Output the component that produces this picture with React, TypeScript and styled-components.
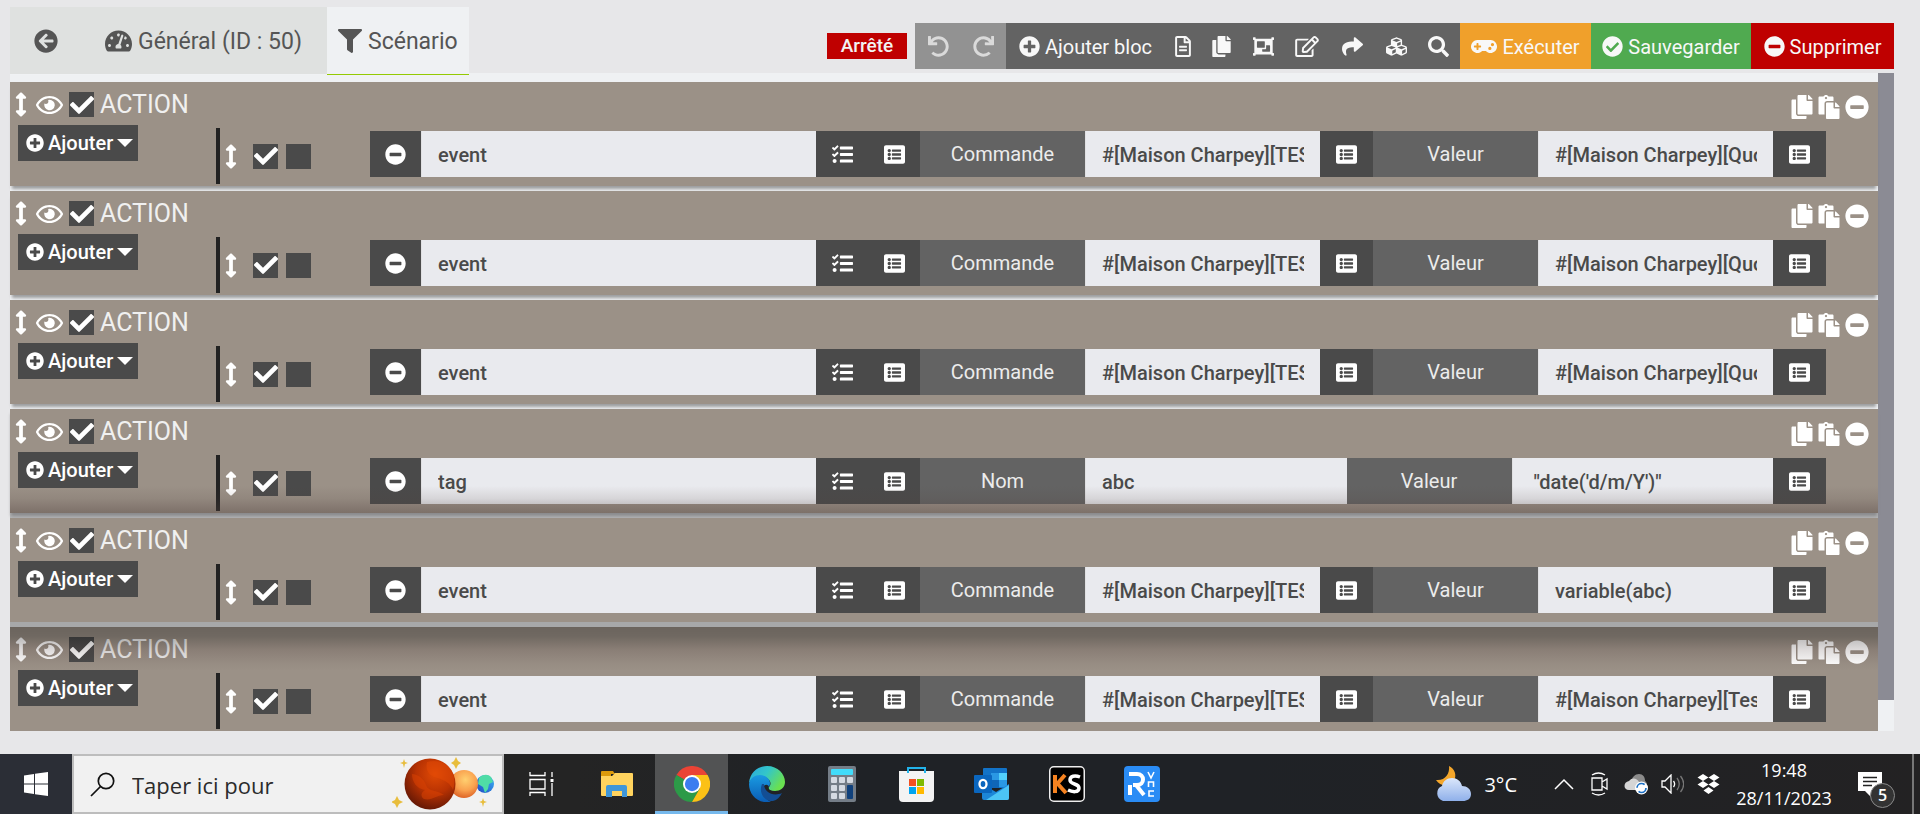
import React from "react";
import styled, { createGlobalStyle } from "styled-components";
import {
  FaArrowCircleLeft, FaTachometerAlt, FaFilter, FaArrowsAltV, FaRegEye, FaCheck, FaPlusCircle,
  FaMinusCircle, FaListAlt, FaUndo, FaRedo, FaRegFileAlt, FaCopy, FaObjectGroup, FaRegEdit,
  FaShare, FaCubes, FaSearch, FaGamepad, FaCheckCircle, FaPaste,
} from "react-icons/fa";

const GlobalStyle = createGlobalStyle`
  * { box-sizing: border-box; }
  body { margin: 0; background: #e7e7e9; font-family: Roboto, "Liberation Sans", sans-serif; color: #fff; }
  button, input { font: inherit; color: inherit; border: 0; margin: 0; padding: 0; background: none; border-radius: 0; }
  button { cursor: pointer; }
`;

const Page = styled.div`
  min-height: 100vh;
  display: flex;
  flex-direction: column;
`;

const Icon = styled.span<{ $size?: number; $w?: number }>`
  display: inline-flex;
  flex: none;
  svg {
    height: ${(p) => p.$size ?? 21}px;
    width: ${(p) => p.$w ?? p.$size ?? 21}px;
    display: block;
  }
`;

/* ---------- header ---------- */
const Header = styled.header`
  display: flex;
  justify-content: space-between;
  height: 73px;
  padding: 7px 26px 0 10px;
`;

const Tabs = styled.nav`
  display: flex;
  position: relative;
  z-index: 1;
  height: 68px;
  font-size: 23px;
  background: #dfe1e0;
`;

const Tab = styled.a<{ $active?: boolean; $pad?: string }>`
  display: flex;
  align-items: center;
  gap: 6px;
  padding: ${(p) => p.$pad ?? "1px 11px 0"};
  color: #555;
  text-decoration: none;
  white-space: nowrap;
  background: ${(p) => (p.$active ? "#eff1f3" : "transparent")};
  border-bottom: 1px solid ${(p) => (p.$active ? "#94ca02" : "#f0f2f4")};
`;

const Toolbar = styled.div`
  display: flex;
  align-items: center;
  height: 46px;
  margin-top: 16px;
  font-size: 20px;
  color: #f3f3f3;
`;

const Status = styled.span`
  background: #bf0000;
  line-height: 26px;
  width: 80px;
  text-align: center;
  font-size: 19px;
  font-weight: 500;
  margin-right: 8px;
`;

const ToolButton = styled.button<{ $bg?: string; $w?: number; $dim?: boolean }>`
  display: flex;
  align-items: center;
  justify-content: center;
  gap: 5px;
  height: 46px;
  width: ${(p) => p.$w ?? 42}px;
  padding-top: 1px;
  white-space: nowrap;
  background: ${(p) => p.$bg ?? "#636363"};
  color: ${(p) => (p.$dim ? "#dadada" : "#f8f8f8")};
`;

/* ---------- scenario blocks ---------- */
const Panel = styled.main`
  display: flex;
  margin: 0 26px 23px 10px;
  background: #eff1f3;
`;

const Blocks = styled.div`
  flex: 1;
  min-width: 0;
  display: flex;
  flex-direction: column;
  gap: 5px;
  padding-top: 9px;
`;

const Track = styled.div`
  width: 16px;
  flex: none;
`;

const Thumb = styled.div`
  height: 95.3%;
  background: #8b8b94;
`;

type Shade = "none" | "bottom" | "flat" | "top";

const shadeImage: Record<Shade, string> = {
  none: "none",
  flat: "none",
  bottom: "linear-gradient(to bottom, rgba(80,64,60,0) 74%, rgba(80,64,60,.12) 86%, rgba(80,64,60,.4) 100%)",
  top: "linear-gradient(to bottom, rgba(0,0,0,.31) 0, rgba(0,0,0,.28) 9%, rgba(50,30,30,.16) 22%, rgba(50,30,30,.04) 35%, rgba(50,30,30,0) 42%)",
};

const Block = styled.section<{ $shade: Shade }>`
  position: relative;
  height: 104px;
  background: #9b9187;
  box-shadow: ${(p) =>
    p.$shade === "flat" ? "0 5px 0 #a7a8a9"
      : p.$shade === "bottom" ? "0 4px 3px -1px #8a8a8c, 0 5px 0 #b2b3b4"
      : p.$shade === "top" ? "none" : "0 5px 3px -2px rgba(0,0,0,.35)"};
  &::after {
    content: "";
    position: absolute;
    inset: 0;
    pointer-events: none;
    background-image: ${(p) => shadeImage[p.$shade]};
  }
`;

const BlockHead = styled.div`
  display: flex;
  align-items: center;
  justify-content: space-between;
  height: 43px;
  padding: 2px 9px 0 5px;
`;

const HeadGroup = styled.div`
  display: flex;
  align-items: center;
  gap: 6px;
`;

const HeadActions = styled.div`
  display: flex;
  align-items: center;
  gap: 4px;
  padding-top: 4px;
`;

const Title = styled.span`
  font-size: 25px;
  line-height: 32px;
  color: #f0f0f0;
`;

const IconButton = styled.button`
  display: inline-flex;
`;

const Handle = styled.span<{ $w: number }>`
  display: inline-flex;
  width: ${(p) => p.$w}px;
  svg { height: 25px; width: 12px; display: block; }
`;

const CheckWrap = styled.label`
  display: inline-grid;
  width: 25px;
  height: 25px;
  background: #4a4a4a;
  place-items: center;
  > * { grid-area: 1 / 1; }
  svg { width: 24px; height: 24px; pointer-events: none; }
`;

const CheckInput = styled.input`
  appearance: none;
  width: 25px;
  height: 25px;
`;

const BlockBody = styled.div`
  display: flex;
  padding-left: 8px;
`;

const AddButton = styled.button`
  display: flex;
  align-items: center;
  width: 120px;
  height: 36px;
  padding-left: 8px;
  gap: 4px;
  background: #4a4a4a;
  font-size: 20px;
  font-weight: 500;
`;

const Expression = styled.div`
  flex: 1;
  min-width: 0;
  display: flex;
  align-items: center;
  height: 56px;
  margin: 3px 52px 0 78px;
  border-left: 4px solid #222;
  padding-left: 5px;
`;

const Controls = styled.div`
  display: flex;
  align-items: center;
  gap: 8px;
  width: 145px;
  flex: none;
`;

const Fields = styled.div`
  flex: 1;
  min-width: 0;
  display: flex;
  height: 46px;
  margin-bottom: 4px;
`;

const CommandPart = styled.div`
  flex: 550 1 0;
  min-width: 0;
  display: flex;
`;

const OptionsPart = styled.div`
  flex: 906 1 0;
  min-width: 0;
  display: flex;
`;

const DarkButton = styled.button<{ $w?: number }>`
  width: ${(p) => p.$w ?? 52}px;
  flex: none;
  display: flex;
  align-items: center;
  justify-content: center;
  background: #4a4a4a;
`;

const FieldLabel = styled.label`
  width: 165px;
  flex: none;
  background: #636363;
  color: #ececec;
  font-size: 20px;
  line-height: 46px;
  text-align: center;
`;

const TextField = styled.input`
  flex: 1 1 0;
  width: 0;
  min-width: 0;
  padding: 2px 16px 0;
  border-left: 1px solid #e0e0e2;
  background: #e9eaee;
  color: #4a4a4a;
  font-size: 20px;
  font-weight: 500;
  outline: none;
`;

const TasksIcon = () => (
  <svg viewBox="0 0 512 512" fill="currentColor">
    <path d="M208 132h288c8.800 0 16-7.200 16-16V76c0-8.800-7.200-16-16-16H208c-8.800 0-16 7.200-16 16v40c0 8.800 7.200 16 16 16zm0 160h288c8.800 0 16-7.200 16-16v-40c0-8.800-7.200-16-16-16H208c-8.800 0-16 7.200-16 16v40c0 8.800 7.200 16 16 16zm0 160h288c8.800 0 16-7.200 16-16v-40c0-8.800-7.200-16-16-16H208c-8.800 0-16 7.200-16 16v40c0 8.800 7.200 16 16 16zM64 368c-26.500 0-48.600 21.500-48.600 48s22.100 48 48.600 48 48-21.500 48-48-21.500-48-48-48zm92.500-299l-72.200 72.200-15.600 15.600c-4.700 4.700-12.900 4.700-17.600 0L3.500 109.400c-4.700-4.700-4.700-12.300 0-17l15.700-15.700c4.700-4.700 12.300-4.700 17 0l22.700 22.100 63.700-63.300c4.700-4.700 12.300-4.700 17 0l17 16.500c4.600 4.700 4.600 12.300-.1 17zm0 159.600l-72.200 72.200-15.700 15.700c-4.700 4.700-12.900 4.700-17.600 0L3.500 269c-4.700-4.700-4.700-12.300 0-17l15.700-15.700c4.700-4.700 12.300-4.700 17 0l22.700 22.100 63.700-63.700c4.700-4.700 12.300-4.700 17 0l17 17c4.600 4.600 4.600 12.200-.1 16.900z" />
  </svg>
);

function Check({ checked, label }: { checked?: boolean; label: string }) {
  return (
    <CheckWrap>
      <CheckInput type="checkbox" defaultChecked={checked} aria-label={label} />
      {checked && <FaCheck />}
    </CheckWrap>
  );
}

type Option = { label: string; value: string; picker: boolean };
type BlockData = { command: string; options: Option[]; shade: Shade };

const cmd: Option = { label: "Commande", value: "#[Maison Charpey][TEST]", picker: true };
const quote: Option = { label: "Valeur", value: "#[Maison Charpey][Quotidien]", picker: true };

const blocks: BlockData[] = [
  { command: "event", options: [cmd, quote], shade: "none" },
  { command: "event", options: [cmd, quote], shade: "none" },
  { command: "event", options: [cmd, quote], shade: "none" },
  {
    command: "tag",
    options: [
      { label: "Nom", value: "abc", picker: false },
      { label: "Valeur", value: " \"date('d/m/Y')\"", picker: true },
    ],
    shade: "bottom",
  },
  { command: "event", options: [cmd, { label: "Valeur", value: "variable(abc)", picker: true }], shade: "flat" },
  { command: "event", options: [cmd, { label: "Valeur", value: "#[Maison Charpey][Tes", picker: true }], shade: "top" },
];

function ActionBlock({ data, index }: { data: BlockData; index: number }) {
  return (
    <Block $shade={data.shade}>
      <BlockHead>
        <HeadGroup>
          <Handle $w={15}><FaArrowsAltV /></Handle>
          <IconButton aria-label="Afficher"><Icon $size={24} $w={27}><FaRegEye /></Icon></IconButton>
          <Check checked label="Activer le bloc" />
          <Title>ACTION</Title>
        </HeadGroup>
        <HeadActions>
          <IconButton aria-label="Copier"><Icon $size={24} $w={22}><FaCopy /></Icon></IconButton>
          <IconButton aria-label="Coller"><Icon $size={24}><FaPaste /></Icon></IconButton>
          <IconButton aria-label="Retirer"><Icon $size={24}><FaMinusCircle /></Icon></IconButton>
        </HeadActions>
      </BlockHead>
      <BlockBody>
        <AddButton>
          <Icon $size={18}><FaPlusCircle /></Icon>
          Ajouter
          <svg width="16" height="8" viewBox="0 0 16 8"><path d="M0 0h16L8 8z" fill="currentColor" /></svg>
        </AddButton>
        <Expression>
          <Controls>
            <Handle $w={20}><FaArrowsAltV /></Handle>
            <Check checked label="Activer l'action" />
            <Check label="Exécuter en parallèle" />
          </Controls>
          <Fields>
            <CommandPart>
              <DarkButton $w={51} aria-label="Retirer l'action"><Icon><FaMinusCircle /></Icon></DarkButton>
              <TextField aria-label="Action" defaultValue={data.command} />
              <DarkButton aria-label="Choisir un mot-clé"><Icon><TasksIcon /></Icon></DarkButton>
              <DarkButton aria-label="Choisir une commande"><Icon><FaListAlt /></Icon></DarkButton>
            </CommandPart>
            <OptionsPart>
              {data.options.map((o, i) => {
                const id = `option-${index}-${i}`;
                return (
                  <React.Fragment key={id}>
                    <FieldLabel htmlFor={id}>{o.label}</FieldLabel>
                    <TextField id={id} defaultValue={o.value} />
                    {o.picker && (
                      <DarkButton $w={53} aria-label="Choisir une commande"><Icon><FaListAlt /></Icon></DarkButton>
                    )}
                  </React.Fragment>
                );
              })}
            </OptionsPart>
          </Fields>
        </Expression>
      </BlockBody>
    </Block>
  );
}

/* ---------- taskbar ---------- */
const Taskbar = styled.footer`
  display: flex;
  height: 60px;
  margin-top: auto;
  background: linear-gradient(90deg, #242424 30%, #1f2226 45%, #1f2226 65%, #232223 100%);
  font-family: "Open Sans", "Noto Sans", sans-serif;
`;

const StartButton = styled.button`
  width: 72px;
  flex: none;
  display: grid;
  place-items: center;
  background: #2b2e36;
`;

const SearchBox = styled.div`
  width: 432px;
  flex: none;
  display: flex;
  align-items: center;
  margin-right: 1px;
  padding: 0 6px 0 16px;
  background: #f1f1f1;
  border: 2px solid #bdbdbd;
  input {
    flex: 1;
    min-width: 0;
    padding: 2px 0 0 17px;
    font-size: 22px;
    color: #2b2b2b;
    outline: none;
    &::placeholder { color: #2b2b2b; opacity: 1; }
  }
`;

const TaskButton = styled.button<{ $active?: boolean }>`
  width: 73px;
  margin-right: 2px;
  flex: none;
  display: grid;
  place-items: center;
  border-top: 3px solid ${(p) => (p.$active ? "#525354" : "transparent")};
  border-bottom: 3px solid ${(p) => (p.$active ? "#76b9ed" : "transparent")};
  background: ${(p) => (p.$active ? "#525354" : "transparent")};
`;

const Tray = styled.div`
  margin-left: auto;
  display: flex;
  align-items: center;
`;

const Weather = styled.div`
  display: flex;
  align-items: center;
  gap: 13px;
  margin-right: 37px;
  font-size: 20px;
`;

const TrayIcons = styled.div`
  display: flex;
  align-items: center;
  gap: 13px;
`;

const Clock = styled.div`
  width: 128px;
  text-align: center;
  font-size: 18px;
  line-height: 28px;
`;

const Notice = styled.button`
  position: relative;
  width: 37px;
  height: 60px;
  margin: 0 17px 0 10px;
`;

const NoticeIcon = styled.svg`
  display: block;
`;

const Badge = styled.span`
  position: absolute;
  right: 0;
  top: 29px;
  width: 25px;
  height: 25px;
  border: 1px solid #8a8a8a;
  border-radius: 50%;
  background: #333;
  font-size: 16px;
  font-weight: 600;
  line-height: 23px;
  text-align: center;
`;

const DesktopEdge = styled.div`
  width: 8px;
  height: 60px;
  border-left: 2px solid #777;
`;

const Planets = () => (
  <svg width="104" height="56" viewBox="0 0 104 56">
    <defs>
      <radialGradient id="mars" cx=".6" cy=".3" r=".75">
        <stop offset="0" stopColor="#e04a05" /><stop offset=".5" stopColor="#b83203" /><stop offset="1" stopColor="#5e1605" />
      </radialGradient>
      <radialGradient id="venus" cx=".55" cy=".35" r=".7">
        <stop offset="0" stopColor="#ffd070" /><stop offset=".55" stopColor="#f9a04e" /><stop offset="1" stopColor="#d95a20" />
      </radialGradient>
      <linearGradient id="earth" x1="0" y1="1" x2="1" y2="0">
        <stop offset="0" stopColor="#1d44c4" /><stop offset="1" stopColor="#3fb8f5" />
      </linearGradient>
    </defs>
    <circle cx="93" cy="28" r="9" fill="url(#earth)" />
    <path d="M87 22c4-4 9-4 12-1l2 5-4 2-1 5-3 4-2-6-5-3z" fill="#4fdca6" />
    <circle cx="72" cy="28" r="14" fill="url(#venus)" />
    <circle cx="38" cy="28" r="25.5" fill="url(#mars)" />
    <path d="M35 6c-2 8 2 14 10 16s14 6 16 12c3-9 1-19-6-25-6-4-13-5-20-3z" fill="#e44a05" opacity=".5" />
    <path d="M20 18c0 8 5 15 13 16-5 3-4 7-1 9 8 2 12-4 20-4-6-5-16-3-18-10-2-6-8-11-14-11z" fill="#d84204" opacity=".55" />
    <path d="M12 3l1 3 3 1-3 1-1 4-1-4-3-1 3-1zM64 1l2 4 3 2-3 2-2 4-2-4-3-2 3-2zM5 40l2 4 4 2-4 2-2 4-2-4-4-2 4-2zM91 42l1 3 3 1-3 1-1 4-1-4-3-1 3-1z" fill="#e8bd3c" />
  </svg>
);

const TaskViewIcon = () => (
  <svg width="26" height="24" viewBox="0 0 26 24" fill="none" stroke="#fff" strokeWidth="1.3">
    <path d="M1 0v3.500h15V0M1 24v-3.500h15V24M1 7.500h15v9.500H1zM23 0v5M23 11v13" />
    <path d="M21.500 7h3v3h-3z" fill="#fff" stroke="none" />
  </svg>
);

const ExplorerIcon = () => (
  <svg width="32" height="28" viewBox="0 0 32 28">
    <path d="M0 2a1 1 0 011-1h11l2 3h-4v4H0z" fill="#dc9a0c" />
    <path d="M0 6h11l3-3h17a1 1 0 011 1v21a1 1 0 01-1 1H1a1 1 0 01-1-1z" fill="#ffd35e" />
    <path d="M5 27V17a2 2 0 012-2h17a2 2 0 012 2v10h-5v-6H11v6z" fill="#3f96d8" />
  </svg>
);

const ChromeIcon = () => (
  <svg width="36" height="36" viewBox="0 0 48 48">
    <path d="M24 24L3.200 12A24 24 0 0144.800 12z" fill="#ea4335" />
    <path d="M24 24l10.400 6L24 48A24 24 0 013.200 12z" fill="#2c9a48" />
    <path d="M24 12h20.800A24 24 0 0124 48l10.400-18z" fill="#fbc116" />
    <circle cx="24" cy="24" r="12" fill="#fff" />
    <circle cx="24" cy="24" r="9.500" fill="#3b7df0" />
  </svg>
);

const EdgeIcon = () => (
  <svg width="36" height="36" viewBox="0 0 36 36">
    <defs>
      <linearGradient id="edgeTop" x1="0" y1="0" x2="1" y2=".5">
        <stop offset="0" stopColor="#2aa8e0" /><stop offset=".5" stopColor="#33c6c9" /><stop offset="1" stopColor="#6ae050" />
      </linearGradient>
      <linearGradient id="edgeLeft" x1="0" y1="0" x2="0" y2="1">
        <stop offset="0" stopColor="#1a9be2" /><stop offset="1" stopColor="#0a5cb4" />
      </linearGradient>
    </defs>
    <path d="M0 17C1 6 9 0 18 0c11 0 18 8 18 16 0 6-5 9-10 9-5 0-7-2-6-4 2-2 2-5 0-7-4-5-15-5-20 3z" fill="url(#edgeTop)" />
    <path d="M0 18c1-6 6-9 11-9 6 0 10 4 10 8 0 2-1 4-1 4-1-3-5-3-6 1-2 6 4 12 8 14C9 38 0 29 0 18z" fill="url(#edgeLeft)" />
    <path d="M13 18c-4 9 3 18 11 17 4-1 7-4 9-8-9 4-18-1-18-9z" fill="#134e94" />
  </svg>
);

const CalcIcon = () => (
  <svg width="28" height="36" viewBox="0 0 28 36">
    <rect width="28" height="36" rx="2" fill="#747d87" />
    <rect x="3" y="3" width="22" height="6" rx="1" fill="#42dcfa" />
    <g fill="#d5dae2">
      {[11, 19, 27].map((y) => [3, 11].map((x) => <rect key={`${x}-${y}`} x={x} y={y} width="6" height="6" rx="1" />))}
      <rect x="19" y="11" width="6" height="6" rx="1" />
    </g>
    <rect x="19" y="19" width="6" height="14" rx="1" fill="#10417c" />
  </svg>
);

const StoreIcon = () => (
  <svg width="36" height="36" viewBox="0 0 36 36">
    <path d="M0 5h35v27a4 4 0 01-4 4H4a4 4 0 01-4-4z" fill="#f3f3f3" />
    <path d="M9 7V2h17v5" fill="none" stroke="#22b3ea" strokeWidth="2" />
    <path d="M10 13h7v7h-7z" fill="#f25022" /><path d="M18 13h7v7h-7z" fill="#7fba00" />
    <path d="M10 21h7v7h-7z" fill="#00a4ef" /><path d="M18 21h7v7h-7z" fill="#ffb900" />
  </svg>
);

const OutlookIcon = () => (
  <svg width="36" height="32" viewBox="0 0 36 32">
    <rect x="9" width="24" height="20" rx="1" fill="#1273c8" />
    <path d="M17 5h8v7h-8z" fill="#2a98e4" /><path d="M25 5h8v7h-8z" fill="#52d0fb" /><path d="M17 12h8v8h-8z" fill="#1066b8" />
    <path d="M25 12h8v7h-8z" fill="#2a98e4" />
    <path d="M8 16l14 8 13-8v14a2 2 0 01-2 2H10a2 2 0 01-2-2z" fill="#1c86d8" />
    <path d="M35 17L12 32h21a2 2 0 002-2z" fill="#4cc4f5" />
    <rect y="7" width="18" height="18" rx="1" fill="#0a66be" />
    <ellipse cx="9" cy="16" rx="3.500" ry="4.200" fill="none" stroke="#fff" strokeWidth="2.300" />
  </svg>
);

const KsIcon = () => (
  <svg width="36" height="36" viewBox="0 0 36 36">
    <rect x=".75" y=".75" width="34.500" height="34.500" rx="4" fill="#000" stroke="#eee" strokeWidth="1.500" />
    <path d="M6 9v18M16 9L8 18" fill="none" stroke="#f58220" strokeWidth="4" />
    <path d="M8 17l9 10" fill="none" stroke="#f58220" strokeWidth="4" />
    <path d="M31 11c-5-2-10-1-10 3 0 5 9 3 9 8 0 5-7 4-11 2" fill="none" stroke="#fff" strokeWidth="3.500" />
  </svg>
);

const VncIcon = () => (
  <svg width="36" height="36" viewBox="0 0 36 36" fill="none" stroke="#fff">
    <rect width="36" height="36" rx="4" fill="#2a8cf5" stroke="none" />
    <path d="M5 8h8c8 0 8 11 0 11H9M6 19v10M12 19l8 10" strokeWidth="4" />
    <path d="M24 6l3 6 3-6M24.500 21v-5h5v5M30 25h-5v5h5" strokeWidth="1.600" />
  </svg>
);

const WeatherIcon = () => (
  <svg width="36" height="36" viewBox="0 0 36 36">
    <defs>
      <linearGradient id="cloud" x1="0" y1="0" x2="0" y2="1">
        <stop offset="0" stopColor="#dbe7fb" /><stop offset="1" stopColor="#8fb0ea" />
      </linearGradient>
    </defs>
    <path d="M14 0c6 3 8 9 5 15-4 6-14 6-18-1 9 1 14-6 13-14z" fill="#f3a62b" />
    <path d="M8 35a8 8 0 01-1-15c1-5 5-8 10-8s9 3 10 8c5 0 9 3 9 8s-4 7-8 7z" fill="url(#cloud)" />
  </svg>
);

const apps = [
  { name: "Vue des tâches", icon: <TaskViewIcon /> },
  { name: "Explorateur", icon: <ExplorerIcon /> },
  { name: "Chrome", icon: <ChromeIcon />, active: true },
  { name: "Edge", icon: <EdgeIcon /> },
  { name: "Calculatrice", icon: <CalcIcon /> },
  { name: "Store", icon: <StoreIcon /> },
  { name: "Outlook", icon: <OutlookIcon /> },
  { name: "KS", icon: <KsIcon /> },
  { name: "VNC", icon: <VncIcon /> },
];

const tools = [
  { name: "Journal", icon: <FaRegFileAlt />, w: 35, iw: 16 },
  { name: "Copier", icon: <FaCopy />, w: 43, iw: 19 },
  { name: "Grouper", icon: <FaObjectGroup />, w: 41, iw: 23 },
  { name: "Éditer", icon: <FaRegEdit />, w: 46, iw: 24 },
  { name: "Partager", icon: <FaShare />, w: 45, iw: 21 },
  { name: "Modèles", icon: <FaCubes />, w: 42, iw: 21 },
  { name: "Rechercher", icon: <FaSearch />, w: 43, iw: 21 },
];

export default function App() {
  return (
    <Page>
      <GlobalStyle />
      <Header>
        <Tabs>
          <Tab href="#retour" $pad="0 24px" aria-label="Retour"><Icon $size={24}><FaArrowCircleLeft /></Icon></Tab>
          <Tab href="#general" $pad="1px 25px 0 23px"><Icon $size={24} $w={27}><FaTachometerAlt /></Icon>Général (ID : 50)</Tab>
          <Tab href="#scenario" $active><Icon $size={24}><FaFilter /></Icon>Scénario</Tab>
        </Tabs>
        <Toolbar>
          <Status>Arrêté</Status>
          <ToolButton $bg="#929292" $dim $w={46} aria-label="Annuler"><Icon><FaUndo /></Icon></ToolButton>
          <ToolButton $bg="#929292" $dim $w={45} aria-label="Rétablir"><Icon><FaRedo /></Icon></ToolButton>
          <ToolButton $w={159}><Icon><FaPlusCircle /></Icon>Ajouter bloc</ToolButton>
          {tools.map((t) => (
            <ToolButton key={t.name} $w={t.w} aria-label={t.name}><Icon $w={t.iw}>{t.icon}</Icon></ToolButton>
          ))}
          <ToolButton $bg="#f0a02b" $w={131}><Icon $w={26}><FaGamepad /></Icon>Exécuter</ToolButton>
          <ToolButton $bg="#50aa50" $w={160}><Icon><FaCheckCircle /></Icon>Sauvegarder</ToolButton>
          <ToolButton $bg="#bf0000" $w={143}><Icon><FaMinusCircle /></Icon>Supprimer</ToolButton>
        </Toolbar>
      </Header>

      <Panel>
        <Blocks>
          {blocks.map((b, i) => <ActionBlock key={i} data={b} index={i} />)}
        </Blocks>
        <Track><Thumb /></Track>
      </Panel>

      <Taskbar>
        <StartButton aria-label="Démarrer">
          <svg width="24" height="24" viewBox="0 0 24 24" fill="#fff">
            <path d="M0 3.400L10 2v9.500H0zM11 1.800L24 0v11.500H11zM0 12.500h10V22L0 20.600zM11 12.500h13V24l-13-1.800z" />
          </svg>
        </StartButton>
        <SearchBox>
          <svg width="25" height="25" viewBox="0 0 25 25" fill="none" stroke="#111" strokeWidth="1.700">
            <circle cx="16" cy="9" r="7.700" /><path d="M10.500 14.500L1 24" />
          </svg>
          <input type="text" placeholder="Taper ici pour" aria-label="Rechercher" />
          <Planets />
        </SearchBox>
        {apps.map((a) => (
          <TaskButton key={a.name} $active={a.active} aria-label={a.name}>{a.icon}</TaskButton>
        ))}
        <Tray>
          <Weather><WeatherIcon />3°C</Weather>
          <TrayIcons>
            <svg width="20" height="12" viewBox="0 0 20 12" fill="none" stroke="#fff" strokeWidth="1.500"><path d="M1 11l9-9 9 9" /></svg>
            <svg width="24" height="24" viewBox="0 0 24 24" fill="none" stroke="#fff" strokeWidth="1.300">
              <path d="M5 6h10v12H5zM15 10l5-3v10l-5-3M5 3c4-2.500 9-2.500 13 0M5 21c4 2.500 9 2.500 13 0" />
            </svg>
            <svg width="24" height="24" viewBox="0 0 24 24">
              <path d="M7 10c1-5 4-8 8-8 4 0 6 3 6 7 2 1 3 5 0 7z" fill="#8b8b8b" />
              <path d="M5 18c-6 0-6-8 0-9 3-4 8-3 10 1l6 8z" fill="#d5d5d5" />
              <circle cx="17.500" cy="16" r="6.500" fill="#fff" />
              <circle cx="17.500" cy="16" r="4.500" fill="none" stroke="#1b6fc4" strokeWidth="1.700" strokeDasharray="10 4" />
            </svg>
            <svg width="23" height="20" viewBox="0 0 23 20" fill="none" stroke="#fff" strokeWidth="1.300">
              <path d="M1 7h3l6-6v18l-6-6H1zM12.500 7c1.500 2 1.500 4 0 6" />
              <path d="M16 4c3 4 3 8 0 12M19.500 2c4 5 4 11 0 16" stroke="#777" />
            </svg>
            <svg width="23" height="20" viewBox="0 0 23 20" fill="#fff">
              <path d="M6 0l5.500 3.500L6 7 .5 3.500zM17 0l5.500 3.500L17 7l-5.500-3.500zM6 7l5.500 3.500L6 14 .5 10.500zM17 7l5.500 3.500L17 14l-5.500-3.500zM11.500 13l5 3.500-5 3.500-5-3.500z" />
            </svg>
          </TrayIcons>
          <Clock><div>19:48</div><div>28/11/2023</div></Clock>
          <Notice aria-label="Notifications">
            <NoticeIcon width="25" height="25" viewBox="0 0 25 25">
              <path d="M0 0h24v19H14l-1 6-6-6H0z" fill="#fff" />
              <path d="M5 5.500h14M5 9.500h14M5 13.500h9" stroke="#222" strokeWidth="1.300" />
            </NoticeIcon>
            <Badge>5</Badge>
          </Notice>
          <DesktopEdge />
        </Tray>
      </Taskbar>
    </Page>
  );
}
